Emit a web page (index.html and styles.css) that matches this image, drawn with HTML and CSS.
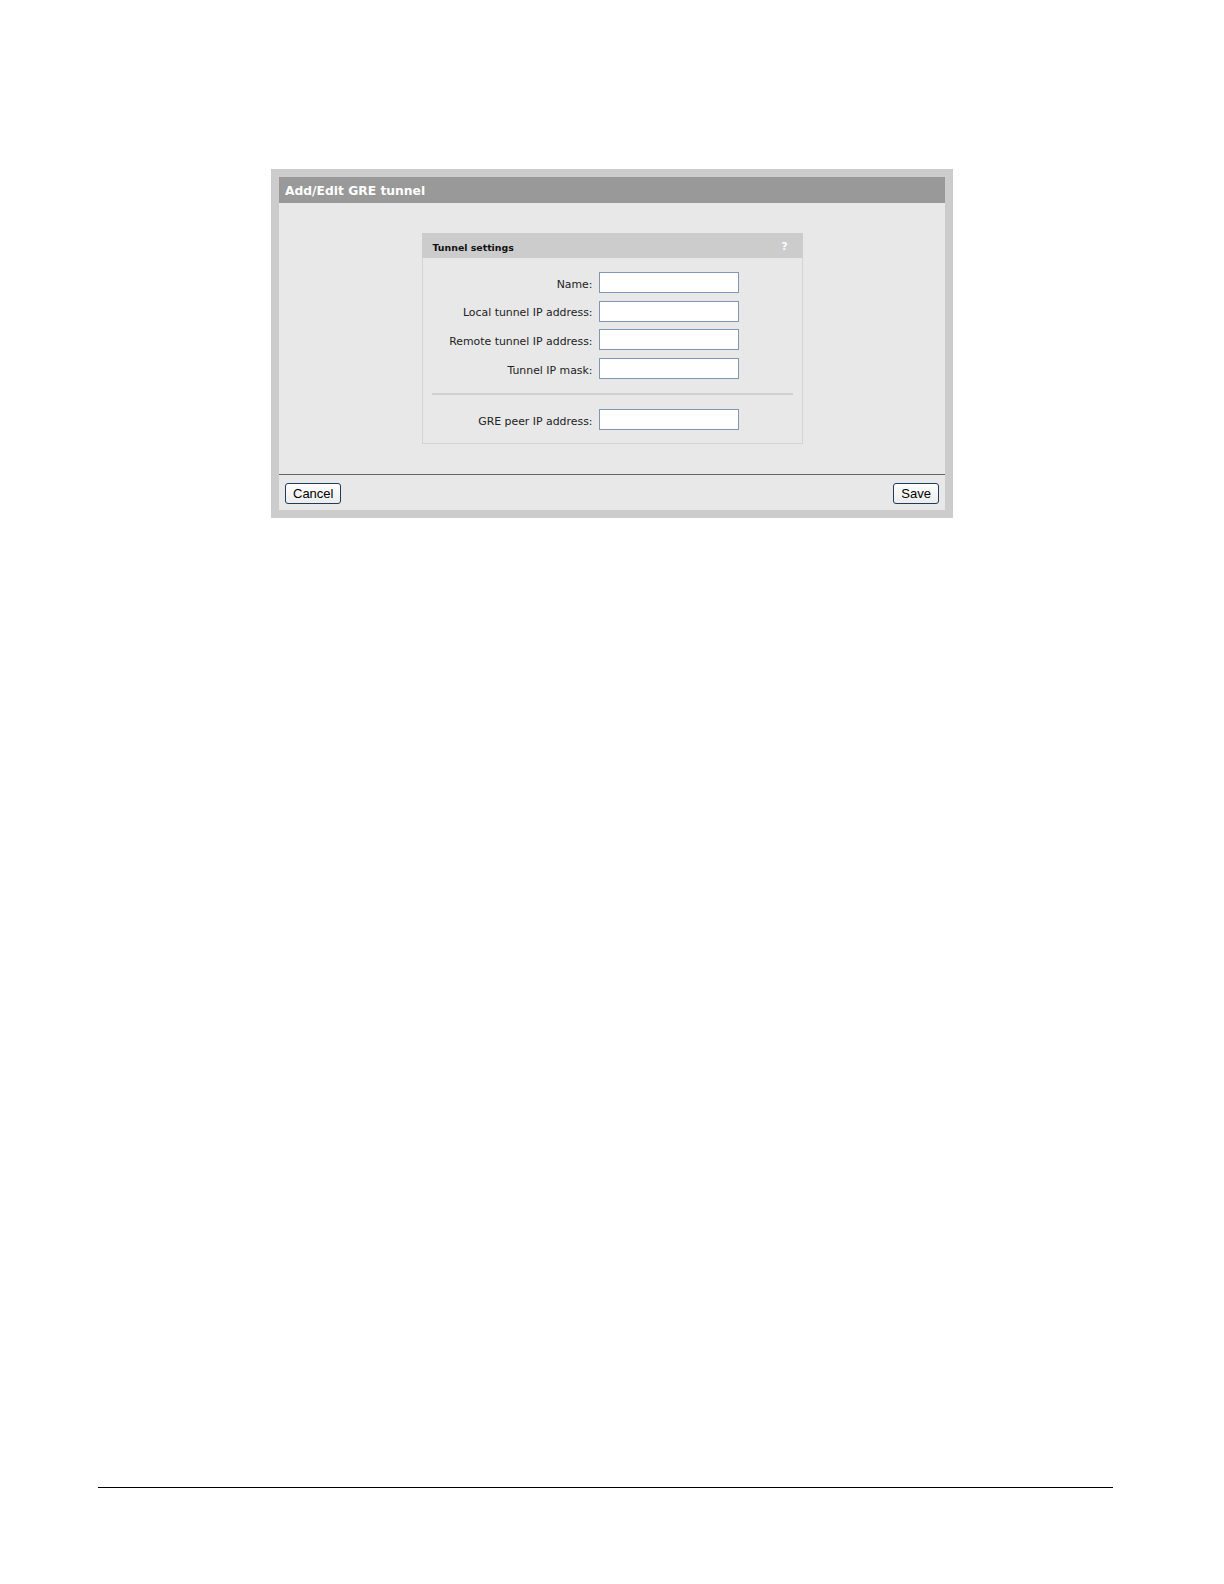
FILE: index.html
```html
<!DOCTYPE html>
<html>
<head>
<meta charset="utf-8">
<title>Add/Edit GRE tunnel</title>
<link rel="stylesheet" href="styles.css">
</head>
<body>
<div class="page">
  <div class="frame">
    <div class="dialog">
      <div class="dialog-title">Add/Edit GRE tunnel</div>
      <div class="dialog-body">
        <div class="panel">
          <div class="panel-head">
            <span class="panel-title">Tunnel settings</span>
            <span class="help">?</span>
          </div>
          <div class="panel-body">
            <div class="rows">
              <label class="lbl">Name:</label><input class="field" type="text">
              <label class="lbl">Local tunnel IP address:</label><input class="field" type="text">
              <label class="lbl">Remote tunnel IP address:</label><input class="field" type="text">
              <label class="lbl">Tunnel IP mask:</label><input class="field" type="text">
            </div>
            <div class="sep"></div>
            <div class="rows">
              <label class="lbl">GRE peer IP address:</label><input class="field" type="text">
            </div>
          </div>
        </div>
      </div>
      <div class="dialog-foot">
        <button class="btn">Cancel</button>
        <button class="btn">Save</button>
      </div>
    </div>
  </div>
  <div class="page-rule"></div>
</div>
</body>
</html>
```
FILE: styles.css
```css
html, body {
  margin: 0;
  padding: 0;
  background: #ffffff;
}
.page {
  padding-top: 169px;
  font-family: "DejaVu Sans", Verdana, sans-serif;
}
.frame {
  margin-left: 271px;
  width: 666px;
  padding: 8px 8px 8px 8px;
  background: #cccccc;
}
.dialog {
  background: #e8e8e8;
}
.dialog-title {
  height: 26px;
  line-height: 28px;
  background: #999999;
  color: #ffffff;
  font-weight: bold;
  font-size: 12.3px;
  padding-left: 6px;
}
.dialog-body {
  padding: 30px 0 30px 0;
  border-bottom: 1px solid #666666;
}
.panel {
  width: 379px;
  margin: 0 auto;
  border: 1px solid #d4d4d4;
  border-top: 0;
  background: #e8e8e8;
}
.panel-head {
  height: 25px;
  background: #cccccc;
  display: flex;
  align-items: center;
  justify-content: space-between;
  padding: 0 15px 0 11px;
  margin: 0 -1px;
}
.panel-title {
  font-size: 9.4px;
  font-weight: bold;
  color: #111111;
  padding-top: 3px;
}
.help {
  font-size: 10.5px;
  font-weight: bold;
  color: #ffffff;
}
.panel-body {
  padding: 14px 0 13px 0;
}
.rows {
  display: grid;
  grid-template-columns: 170px 140px;
  column-gap: 6px;
  row-gap: 7.7px;
  align-items: center;
}
.lbl {
  text-align: right;
  font-size: 10.9px;
  color: #222222;
  padding-top: 3px;
  white-space: nowrap;
}
.field {
  box-sizing: border-box;
  width: 140px;
  height: 21px;
  margin: 0;
  border: 1px solid #8096b3;
  background: #ffffff;
  padding: 0 3px;
}
.sep {
  height: 2px;
  background: #d0d0d0;
  margin: 14px 9px 14px 9px;
}
.dialog-foot {
  height: 35px;
  display: flex;
  align-items: center;
  justify-content: space-between;
  padding: 0 6px;
}
.btn {
  font-family: "Liberation Sans", Arial, sans-serif;
  font-size: 13px;
  color: #000000;
  height: 21px;
  padding: 0 7px;
  border: 1px solid #1d3b5c;
  border-radius: 3px;
  background: linear-gradient(#ffffff, #ececec);
  margin-top: 1px;
}
.page-rule {
  margin: 969px 0 0 98px;
  width: 1015px;
  height: 1px;
  background: #000000;
}
```
